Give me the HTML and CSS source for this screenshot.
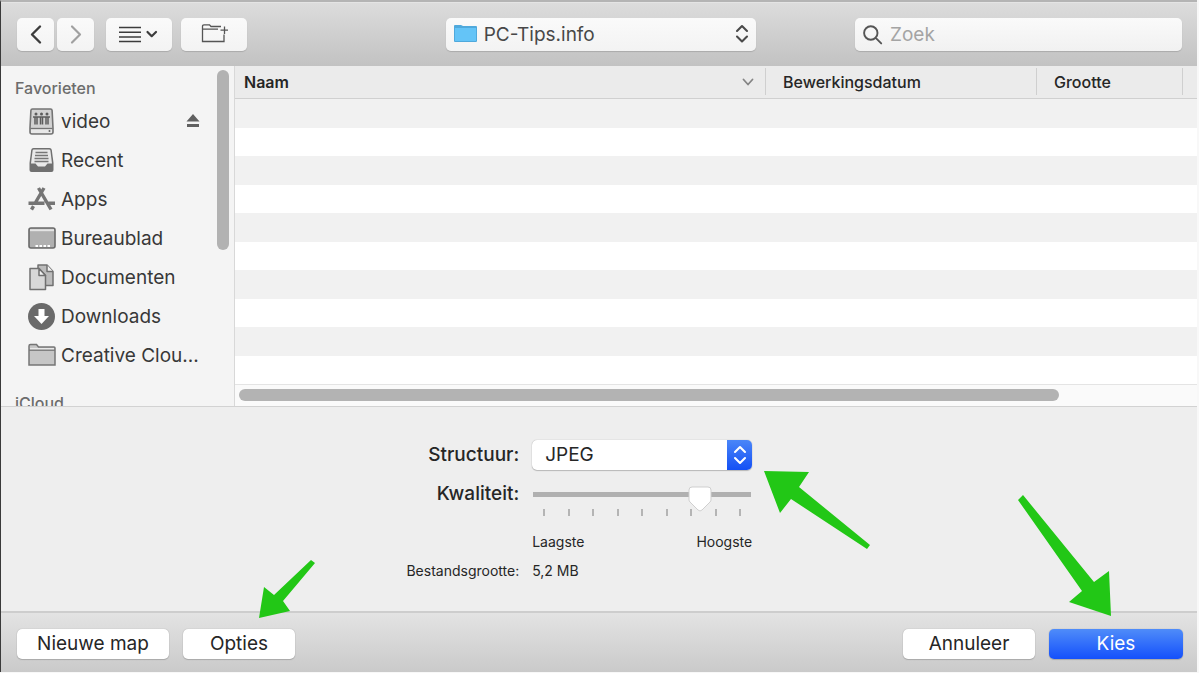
FILE: index.html
```html
<!DOCTYPE html>
<html lang="nl">
<head>
<meta charset="utf-8">
<meta name="viewport" content="width=device-width, initial-scale=1">
<title>PC-Tips.info</title>
<link rel="stylesheet" href="styles.css">
</head>
<body>
<main class="dialog">
  <header class="toolbar">
    <div class="tools">
      <div class="history">
        <button class="tool nav" type="button" aria-label="Vorige">
          <svg width="14" height="22" viewBox="0 0 14 22"><path d="M11 2.500 3 10.500l8 8" fill="none" stroke="#3c3c3c" stroke-width="2.4" stroke-linecap="round" stroke-linejoin="round"/></svg>
        </button>
        <button class="tool nav" type="button" aria-label="Volgende">
          <svg width="14" height="22" viewBox="0 0 14 22"><path d="m3 2.500 8 8-8 8" fill="none" stroke="#a0a0a0" stroke-width="2.2" stroke-linecap="round" stroke-linejoin="round"/></svg>
        </button>
      </div>
      <button class="tool wide view" type="button" aria-label="Weergave">
        <svg width="40" height="20" viewBox="0 0 40 20"><path d="M0 2.500h22M0 7.200h22M0 11.900h22M0 16.600h22" stroke="#3c3c3c" stroke-width="1.500"/><path d="m28.500 7 4.200 4.200L37 7" fill="none" stroke="#3c3c3c" stroke-width="2.200" stroke-linecap="round" stroke-linejoin="round"/></svg>
      </button>
      <button class="tool wide" type="button" aria-label="Nieuwe map maken">
        <svg width="28" height="22" viewBox="0 0 28 22" fill="none" stroke="#555" stroke-width="1.300"><path d="M21 2.500H11L9.500.8H4Q2.500.8 2.500 2.300V17.500H24V10.500M2.500 5.200h15.500M24.500 2.500v7.500M20.500 6.200h7.500"/></svg>
      </button>
    </div>
    <span class="space space-large"></span>
    <div class="popup location">
      <svg class="popup-icon" width="24" height="20" viewBox="0 0 24 20"><path d="M0 2Q0 1 1 1h6l2 1h13q1 0 1 1v14q0 1-1 1H1q-1 0-1-1z" fill="#4fa9dc"/><path d="M1 4h21v13H1z" fill="#64c4f7"/></svg>
      <select class="location-select" aria-label="Map"><option>PC-Tips.info</option></select>
      <svg class="popup-arrows" width="14" height="20" viewBox="0 0 14 20"><path d="m2 7 5-5 5 5M2 12.500l5 5 5-5" fill="none" stroke="#4a4a4a" stroke-width="2.100" stroke-linecap="round" stroke-linejoin="round"/></svg>
    </div>
    <span class="space"></span>
    <label class="search">
      <svg width="20" height="20" viewBox="0 0 20 20"><path d="M14.500 8a6.700 6.700 0 1 1-13.400 0 6.700 6.700 0 0 1 13.400 0zM12.700 12.900l5.500 5.500" fill="none" stroke="#555" stroke-width="1.900" stroke-linecap="round"/></svg>
      <input class="search-input" type="search" placeholder="Zoek" aria-label="Zoek">
    </label>
  </header>

  <section class="browser">
    <nav class="sidebar" aria-label="Navigatiekolom">
      <h2 class="group">Favorieten</h2>
      <ul class="places">
        <li class="place">
          <svg width="28" height="28" viewBox="0 0 28 28"><path d="M4.500 1h18q1.500 0 1.600 1.500L25 20v4q0 2-2 2H4q-2 0-2-2v-4L2.900 2.500Q3 1 4.500 1z" fill="#d2d2d2" stroke="#747474" stroke-width="1.600"/><path d="M2.500 20.500h22" stroke="#747474" stroke-width="1.300"/><path d="M3 21.500h21v3.500H3z" fill="#e8e8e8"/><g fill="#5c5c5c"><circle cx="8" cy="6" r="1.500"/><circle cx="13.500" cy="6" r="1.500"/><circle cx="19" cy="6" r="1.500"/></g><path d="M5 9h17M7 16.500V9M9 16.500V9M12.500 16.500V9M14.500 16.500V9M18 16.500V9M20 16.500V9" fill="none" stroke="#5c5c5c" stroke-width="1.500"/><circle cx="21.500" cy="23" r="1" fill="#666"/></svg>
          <span class="place-name">video</span>
          <button class="eject" type="button" aria-label="Verwijder video">
            <svg width="14" height="16" viewBox="0 0 14 16"><path d="m7 0 6.500 7.500H.5zM1 10h12v3H1z" fill="#606060"/></svg>
          </button>
        </li>
        <li class="place">
          <svg width="28" height="28" viewBox="0 0 28 28"><path d="M5.500 1h16q2 0 2.300 2L25.500 16v7q0 2-2 2H3.500q-2 0-2-2v-7L3.200 3Q3.500 1 5.500 1z" fill="#707070"/><path d="M5.800 2.600h15.400q1 0 1.200 1L24 16.500h-4.500l-2.500 3h-7l-2.500-3H3L4.600 3.600q.2-1 1.200-1z" fill="#e9e9e9"/><path d="M7.500 5.500h12M7 8.500h13M6.500 11.500h14M6.500 14.500h14" stroke="#777" stroke-width="1.300"/></svg>
          <span class="place-name">Recent</span>
        </li>
        <li class="place">
          <svg width="28" height="28" viewBox="0 0 28 28" fill="none" stroke="#757575" stroke-width="3.400"><path d="m10.500 2 12.500 21.500M16 2 7.500 16.500M.5 17.200h16M20.500 17.200H27M5.500 20.200l-2 3.500"/></svg>
          <span class="place-name">Apps</span>
        </li>
        <li class="place">
          <svg width="28" height="28" viewBox="0 0 28 28"><rect x="1" y="3" width="26" height="20" rx="2" fill="#b0b0b0" stroke="#6a6a6a" stroke-width="1.600"/><path d="M2 5.200h24" stroke="#e4e4e4" stroke-width="2"/><path d="M7.500 21H10M11.500 21H14M15.500 21H18M19.500 21H22" stroke="#fff" stroke-width="2"/></svg>
          <span class="place-name">Bureaublad</span>
        </li>
        <li class="place">
          <svg width="28" height="28" viewBox="0 0 28 28" stroke="#707070" stroke-width="1.500" stroke-linejoin="round"><path d="M10 1h9l6 6.500V21.500H10z" fill="#bcbcbc"/><path d="M19 1v6.500h6" fill="#f2f2f2"/><path d="M2 4.500h9l6.500 7V25.500H2z" fill="#d8d8d8"/><path d="M11 4.500v7h6.500z" fill="#f2f2f2"/></svg>
          <span class="place-name">Documenten</span>
        </li>
        <li class="place">
          <svg width="28" height="28" viewBox="0 0 28 28"><circle cx="13.500" cy="13.500" r="13.500" fill="#6a6a6a"/><path d="M10.500 6h6v7h4.500l-7.500 8L6 13h4.500z" fill="#fff"/></svg>
          <span class="place-name">Downloads</span>
        </li>
        <li class="place">
          <svg width="28" height="28" viewBox="0 0 28 28"><path d="M1 23V4q0-1.500 1.500-1.500H8.500L10.500 5H26q1 0 1 1v17z" fill="#c6c6c6" stroke="#757575" stroke-width="1.500"/><path d="M2 6h24v2H2z" fill="#e8e8e8"/><path d="M1 8.200h26" stroke="#757575" stroke-width="1.300"/></svg>
          <span class="place-name">Creative Clou...</span>
        </li>
      </ul>
      <h2 class="group">iCloud</h2>
      <span class="sidebar-thumb"></span>
    </nav>
    <div class="listing">
      <table class="files">
        <thead>
          <tr>
            <th class="col col-name" scope="col"><span class="col-label">Naam<svg width="12" height="8" viewBox="0 0 12 8"><path d="m1.500 1.500 4.500 5 4.500-5" fill="none" stroke="#858585" stroke-width="1.800" stroke-linecap="round" stroke-linejoin="round"/></svg></span></th>
            <th class="col col-date" scope="col">Bewerkingsdatum</th>
            <th class="col col-size" scope="col">Grootte</th>
            <td class="col-rest"></td>
          </tr>
        </thead>
        <tbody>
          <tr class="row"><td colspan="4"></td></tr>
          <tr class="row"><td colspan="4"></td></tr>
          <tr class="row"><td colspan="4"></td></tr>
          <tr class="row"><td colspan="4"></td></tr>
          <tr class="row"><td colspan="4"></td></tr>
          <tr class="row"><td colspan="4"></td></tr>
          <tr class="row"><td colspan="4"></td></tr>
          <tr class="row"><td colspan="4"></td></tr>
          <tr class="row"><td colspan="4"></td></tr>
          <tr class="row"><td colspan="4"></td></tr>
        </tbody>
      </table>
      <div class="scroll-track"><div class="scroll-thumb"></div></div>
    </div>
  </section>

  <section class="export">
    <label class="caption" for="format">Structuur:</label>
    <div class="popup field">
      <select class="format-select" id="format"><option>JPEG</option></select>
      <span class="format-cap"><svg width="14" height="20" viewBox="0 0 14 20"><path d="m2 7 5-5 5 5M2 13l5 5 5-5" fill="none" stroke="#fff" stroke-width="2.100" stroke-linecap="round" stroke-linejoin="round"/></svg></span>
      <svg class="arrow arrow-format" width="109" height="80" viewBox="0 0 109 80"><path d="M1 1 46 2 36 17 107 75 104 79 28 29 17 43z" fill="#22c716"/></svg>
    </div>
    <label class="caption" for="quality">Kwaliteit:</label>
    <div class="field quality">
      <input class="slider" id="quality" type="range" min="0" max="100" value="80">
      <div class="ticks"><i class="tick"></i><i class="tick"></i><i class="tick"></i><i class="tick"></i><i class="tick"></i><i class="tick"></i><i class="tick"></i><i class="tick"></i><i class="tick"></i></div>
      <div class="ends"><span>Laagste</span><span>Hoogste</span></div>
    </div>
    <span class="caption small">Bestandsgrootte:</span>
    <span class="field small">5,2 MB</span>
  </section>

  <footer class="actions">
    <button class="action new-folder" type="button">Nieuwe map</button>
    <div class="target">
      <button class="action options" type="button">Opties</button>
      <svg class="arrow arrow-options" width="58" height="60" viewBox="0 0 58 60"><path d="M1 59 6 28 16 36 53 1 57 4 25 42 32 52z" fill="#22c716"/></svg>
    </div>
    <button class="action cancel" type="button">Annuleer</button>
    <div class="target">
      <button class="action choose" type="button">Kies</button>
      <svg class="arrow arrow-choose" width="96" height="123" viewBox="0 0 96 123"><path d="M94 122 92 77 77 88 6 1 1 6 65 97 52 108z" fill="#22c716"/></svg>
    </div>
  </footer>
</main>
</body>
</html>
```
FILE: styles.css
```css
* {
  box-sizing: border-box;
}

body {
  margin: 0;
  background: #f8f8f8;
  color: #262626;
  font: 19px/24px Inter, "Liberation Sans", sans-serif;
}

button,
input,
select {
  margin: 0;
  border: 0;
  color: inherit;
  font: inherit;
}

svg {
  display: block;
  flex: none;
}

.dialog {
  display: flex;
  flex-direction: column;
  margin-right: 2px;
  border-top: 2px solid #b4b4b4;
  border-left: 1px solid #3a3a3a;
  background: #eee;
}

/* Toolbar */

.toolbar {
  display: flex;
  align-items: center;
  padding: 15px 15px 15px 16px;
  border-top: 1px solid #e4e4e4;
  background: linear-gradient(#dcdcdc, #c2c2c2);
}

.tools {
  display: flex;
  gap: 9px;
}

.history {
  display: flex;
  gap: 3px;
  margin-right: 3px;
}

.tool {
  display: flex;
  align-items: center;
  justify-content: center;
  height: 33px;
  padding: 0;
  border-radius: 5px;
  background: linear-gradient(#fafafa, #f3f3f3);
  box-shadow: 0 1px 1px #aaa;
}

.nav {
  width: 37px;
}

.wide {
  width: 66px;
}

.space {
  flex: 1;
}

.space-large {
  flex: 2;
}

.popup {
  position: relative;
}

.location {
  width: 310px;
}

.location-select {
  width: 100%;
  height: 33px;
  padding: 0 32px 0 38px;
  appearance: none;
  border-radius: 5px;
  background: linear-gradient(#fafafa, #f3f3f3);
  box-shadow: 0 1px 1px #aaa;
  color: #484848;
}

.popup-icon {
  position: absolute;
  top: 6px;
  left: 8px;
  pointer-events: none;
}

.popup-arrows {
  position: absolute;
  top: 6px;
  right: 7px;
  pointer-events: none;
}

.search {
  display: flex;
  align-items: center;
  gap: 7px;
  width: 327px;
  height: 33px;
  padding: 0 8px;
  border-radius: 5px;
  background: linear-gradient(#fafafa, #f1f1f1);
  box-shadow: 0 1px 1px #aaa;
}

.search-input {
  flex: 1;
  min-width: 0;
  padding: 0;
  appearance: none;
  background: none;
}

.search-input::placeholder {
  color: #a4a4a4;
}

/* File browser */

.browser {
  display: flex;
  border-bottom: 1px solid #d2d2d2;
}

.sidebar {
  position: relative;
  flex: none;
  width: 234px;
  padding: 10px 0 0 14px;
  overflow: hidden;
  contain: size;
  border-right: 1px solid #d8d8d8;
  background: #f4f4f4;
}

.group {
  margin: 0;
  color: #6c6c6c;
  font-size: 16px;
  font-weight: 500;
  line-height: 24px;
}

.places {
  margin: 2px 0 16px;
  padding: 0;
  list-style: none;
}

.place {
  display: flex;
  align-items: center;
  height: 39px;
  padding: 0 34px 0 13px;
  color: #383838;
}

.place-name {
  flex: 1;
  margin-left: 5px;
  white-space: nowrap;
}

.eject {
  padding: 0;
  background: none;
}

.sidebar-thumb {
  position: absolute;
  top: 4px;
  right: 5px;
  width: 12px;
  height: 180px;
  border-radius: 6px;
  background: #b2b2b2;
}

.listing {
  flex: 1;
  min-width: 0;
}

.files {
  width: 100%;
  table-layout: fixed;
  border-collapse: separate;
  border-spacing: 0;
  font-size: 16px;
}

.col,
.col-rest {
  height: 33px;
  padding: 0;
  border-bottom: 1px solid #d0d0d0;
  background: #ebebeb;
}

.col {
  background: linear-gradient(#cfcfcf, #cfcfcf) right 2px / 1px 27px no-repeat #ebebeb;
  font-weight: 500;
  text-align: left;
}

.col-name {
  padding-left: 9px;
  font-weight: 600;
}

.col-label {
  display: flex;
  align-items: center;
  justify-content: space-between;
  padding-right: 12px;
}

.col-date {
  width: 271px;
  padding-left: 17px;
}

.col-size {
  width: 146px;
  padding-left: 17px;
}

.col-rest {
  width: 14px;
}

.row {
  height: 29px;
  background: #f1f1f1;
}

.row:nth-child(even) {
  height: 28px;
  background: #fff;
}

.row td {
  padding: 0;
}

.scroll-track {
  padding: 4px 4px 5px;
  border-top: 1px solid #e4e4e4;
  background: #fafafa;
}

.scroll-thumb {
  width: 86%;
  height: 12px;
  border-radius: 6px;
  background: #b3b3b3;
}

/* Export settings */

.export {
  display: grid;
  grid-template-columns: 6fr 220px 5fr;
  column-gap: 13px;
  row-gap: 12px;
  padding: 33px 0 32px;
}

.caption {
  grid-column: 1;
  font-weight: 500;
  text-align: right;
}

.caption[for="format"] {
  align-self: center;
}

.field {
  grid-column: 2;
}

.format-select {
  width: 100%;
  height: 30px;
  padding: 0 32px 0 13px;
  appearance: none;
  border-radius: 5px;
  background: #fff;
  box-shadow: 0 0 1px #999, 0 1px 1px #bbb;
}

.format-cap {
  position: absolute;
  top: 0;
  right: 0;
  display: flex;
  align-items: center;
  justify-content: center;
  width: 25px;
  height: 30px;
  border-radius: 0 5px 5px 0;
  background: linear-gradient(#4a86f8, #1450f5);
  pointer-events: none;
}

.quality {
  padding-top: 4px;
}

.slider {
  position: relative;
  display: block;
  width: 100%;
  height: 25px;
  appearance: none;
  background: linear-gradient(#b0b0b0, #b0b0b0) center 6px / 218px 5px no-repeat;
}

.slider::-webkit-slider-thumb {
  width: 26px;
  height: 26px;
  appearance: none;
  background: url("data:image/svg+xml,%3Csvg xmlns='http://www.w3.org/2000/svg' width='26' height='26'%3E%3Cpath d='M5 1h16q3 0 3 3v10q0 1-1 2l-8 8q-2 2-4 0l-8-8q-1-1-1-2V4q0-3 3-3z' fill='white' stroke='%23cfcfcf'/%3E%3C/svg%3E");
}

.ticks {
  display: flex;
  justify-content: space-between;
  margin-top: -2px;
  padding: 0 11px;
}

.tick {
  width: 2px;
  height: 7px;
  background: #b4b4b4;
}

.ends {
  display: flex;
  justify-content: space-between;
  margin-top: 17px;
  font-size: 14px;
  line-height: 17px;
}

.small {
  font-size: 14px;
  font-weight: 400;
  line-height: 17px;
}

/* Footer */

.actions {
  display: flex;
  gap: 14px;
  padding: 16px 14px 13px 16px;
  border-top: 2px solid #cdcdcd;
  background: linear-gradient(#e3e3e3, #cacaca);
}

.action {
  height: 30px;
  padding: 0;
  border-radius: 5px;
  background: #fff;
  box-shadow: 0 0 1px #999, 0 1px 1px #aaa;
}

.new-folder {
  width: 152px;
}

.options {
  width: 112px;
}

.cancel {
  width: 132px;
  margin-left: auto;
}

.choose {
  width: 134px;
  background: linear-gradient(#4f8cf9, #1450fb);
  color: #fff;
}

.target {
  position: relative;
}

.arrow {
  position: absolute;
  pointer-events: none;
}

.arrow-format {
  top: 30px;
  left: 231px;
}

.arrow-options {
  top: -70px;
  left: 75px;
}

.arrow-choose {
  top: -135px;
  left: -32px;
}
```
